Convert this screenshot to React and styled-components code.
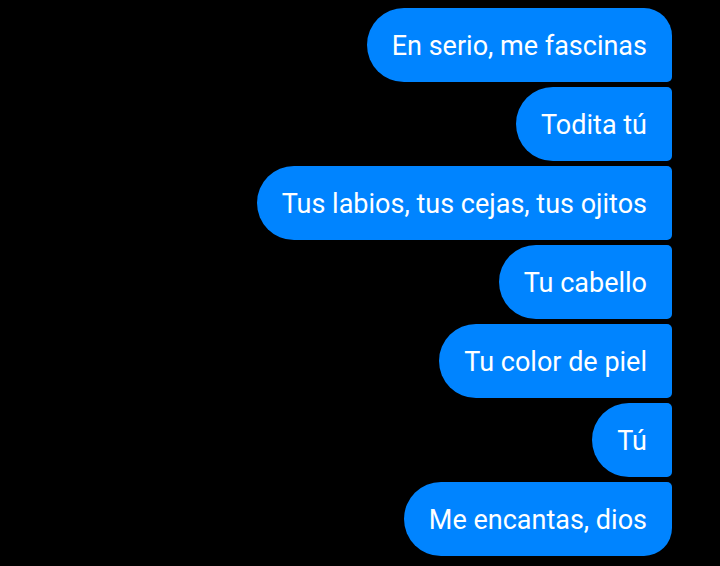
import React from "react";
import styled, { createGlobalStyle } from "styled-components";

const GlobalStyle = createGlobalStyle`
  html, body {
    margin: 0;
    background: #000;
  }
`;

const messages = [
  "En serio, me fascinas",
  "Todita tú",
  "Tus labios, tus cejas, tus ojitos",
  "Tu cabello",
  "Tu color de piel",
  "Tú",
  "Me encantas, dios",
];

const App = () => {
  return (
    <>
      <GlobalStyle />
      <Thread>
        {messages.map((text, i) => (
          <Bubble
            key={i}
            $first={i === 0}
            $last={i === messages.length - 1}
          >
            {text}
          </Bubble>
        ))}
      </Thread>
    </>
  );
};

const Thread = styled.div`
  width: 720px;
  height: 566px;
  box-sizing: border-box;
  padding: 8px 48px 0 0;
  display: flex;
  flex-direction: column;
  align-items: flex-end;
  gap: 5px;
  background: #000;
`;

const Bubble = styled.div`
  height: 74px;
  box-sizing: border-box;
  padding: 1px 25px 0;
  display: flex;
  align-items: center;
  background: #0084ff;
  color: #fff;
  font-family: Roboto, "Noto Sans", sans-serif;
  font-size: 27px;
  white-space: nowrap;
  border-radius: 37px ${(p) => (p.$first ? "28px" : "5px")}
    ${(p) => (p.$last ? "28px" : "5px")} 37px;
`;

export default App;
